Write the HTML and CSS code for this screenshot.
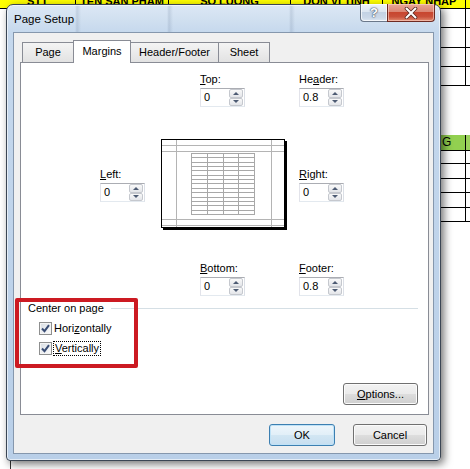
FILE: index.html
```html
<!DOCTYPE html>
<html>
<head>
<meta charset="utf-8">
<link rel="stylesheet" href="styles.css">
</head>
<body>
<div class="sheet">
  <div class="hdr">
    <div class="hc w1"><span>STT</span></div>
    <div class="hc w2"><span>TEN SAN PHAM</span></div>
    <div class="hc w3"><span>SO LUONG</span></div>
    <div class="hc w4"><span>DON VI TINH</span></div>
    <div class="hc w5"><span>NGAY NHAP</span></div>
    <div class="hc w6"></div>
  </div>
  <div class="srow h18"><div class="sp"></div><div class="ca"></div><div class="cb"></div></div>
  <div class="srow h19"><div class="sp"></div><div class="ca"></div><div class="cb"></div></div>
  <div class="srow h18"><div class="sp"></div><div class="ca"></div><div class="cb"></div></div>
  <div class="srow h18"><div class="sp"></div><div class="ca"></div><div class="cb"></div></div>
  <div class="sgap"></div>
  <div class="srow green"><div class="sp"></div><div class="ca"><div class="gcell">G</div></div><div class="cb"></div></div>
  <div class="srow h12"><div class="sp"></div><div class="ca"></div><div class="cb"></div></div>
  <div class="srow h14"><div class="sp"></div><div class="ca"></div><div class="cb"></div></div>
  <div class="srow h13"><div class="sp"></div><div class="ca"></div><div class="cb"></div></div>
  <div class="srow h14"><div class="sp"></div><div class="ca"></div><div class="cb"></div></div>
  <div class="srow h13"><div class="sp"></div><div class="ca"></div><div class="cb"></div></div>
</div>

<div class="window">
  <div class="titlebar">
    <span class="title">Page Setup</span>
    <div class="capbtns">
      <div class="cap-help">?</div>
      <div class="cap-close">
        <svg width="14" height="12" viewBox="0 0 14 12">
          <path d="M2.5 1.5 L11.5 10.5 M11.5 1.5 L2.5 10.5" stroke="#5a2a22" stroke-width="3.6" stroke-linecap="round" fill="none"/>
          <path d="M2.5 1.5 L11.5 10.5 M11.5 1.5 L2.5 10.5" stroke="#ffffff" stroke-width="2" stroke-linecap="round" fill="none"/>
        </svg>
      </div>
    </div>
  </div>
  <div class="client">
    <div class="tabs">
      <div class="tab t-page">Page</div>
      <div class="tab t-margins sel">Margins</div>
      <div class="tab t-hf">Header/Footer</div>
      <div class="tab t-sheet">Sheet</div>
    </div>
    <div class="panel">
      <div class="row-top">
        <div class="field">
          <div class="lbl"><u>T</u>op:</div>
          <div class="spin"><span class="val">0</span><div class="arrows"><div class="ab"><i class="up"></i></div><div class="ab"><i class="dn"></i></div></div></div>
        </div>
        <div class="field">
          <div class="lbl">He<u>a</u>der:</div>
          <div class="spin"><span class="val">0.8</span><div class="arrows"><div class="ab"><i class="up"></i></div><div class="ab"><i class="dn"></i></div></div></div>
        </div>
      </div>

      <div class="row-mid">
        <div class="field f-left">
          <div class="lbl"><u>L</u>eft:</div>
          <div class="spin"><span class="val">0</span><div class="arrows"><div class="ab"><i class="up"></i></div><div class="ab"><i class="dn"></i></div></div></div>
        </div>
        <svg class="preview" width="127" height="92" viewBox="0 0 127 92" shape-rendering="crispEdges">
          <rect x="0.5" y="0.5" width="123" height="88" fill="#fff" stroke="#000"/>
          <rect x="124" y="2" width="2" height="89" fill="#000"/>
          <rect x="2" y="89" width="124" height="2" fill="#000"/>
          <g stroke="#b4b4b4" stroke-width="1">
            <line x1="15.5" y1="1" x2="15.5" y2="88"/>
            <line x1="110.5" y1="1" x2="110.5" y2="88"/>
            <line x1="1" y1="6.5" x2="123" y2="6.5"/>
            <line x1="1" y1="12.5" x2="123" y2="12.5"/>
            <line x1="1" y1="80.5" x2="123" y2="80.5"/>
            <line x1="1" y1="86.5" x2="123" y2="86.5"/>
          </g>
          <g stroke="#a8a8a8" stroke-width="1">
            <line x1="30.5" y1="14" x2="30.5" y2="76"/>
            <line x1="46.5" y1="14" x2="46.5" y2="76"/>
            <line x1="62.5" y1="14" x2="62.5" y2="76"/>
            <line x1="77.5" y1="14" x2="77.5" y2="76"/>
            <line x1="93.5" y1="14" x2="93.5" y2="76"/>
            <line x1="30" y1="14.5" x2="94" y2="14.5"/>
            <line x1="30" y1="18.5" x2="94" y2="18.5"/>
            <line x1="30" y1="23.5" x2="94" y2="23.5"/>
            <line x1="30" y1="27.5" x2="94" y2="27.5"/>
            <line x1="30" y1="31.5" x2="94" y2="31.5"/>
            <line x1="30" y1="36.5" x2="94" y2="36.5"/>
            <line x1="30" y1="40.5" x2="94" y2="40.5"/>
            <line x1="30" y1="44.5" x2="94" y2="44.5"/>
            <line x1="30" y1="49.5" x2="94" y2="49.5"/>
            <line x1="30" y1="53.5" x2="94" y2="53.5"/>
            <line x1="30" y1="58.5" x2="94" y2="58.5"/>
            <line x1="30" y1="62.5" x2="94" y2="62.5"/>
            <line x1="30" y1="66.5" x2="94" y2="66.5"/>
            <line x1="30" y1="71.5" x2="94" y2="71.5"/>
            <line x1="30" y1="75.5" x2="94" y2="75.5"/>
          </g>
        </svg>
        <div class="field f-right">
          <div class="lbl"><u>R</u>ight:</div>
          <div class="spin"><span class="val">0</span><div class="arrows"><div class="ab"><i class="up"></i></div><div class="ab"><i class="dn"></i></div></div></div>
        </div>
      </div>

      <div class="row-bot">
        <div class="field">
          <div class="lbl"><u>B</u>ottom:</div>
          <div class="spin"><span class="val">0</span><div class="arrows"><div class="ab"><i class="up"></i></div><div class="ab"><i class="dn"></i></div></div></div>
        </div>
        <div class="field">
          <div class="lbl"><u>F</u>ooter:</div>
          <div class="spin"><span class="val">0.8</span><div class="arrows"><div class="ab"><i class="up"></i></div><div class="ab"><i class="dn"></i></div></div></div>
        </div>
      </div>

      <div class="group">
        <div class="group-head"><span>Center on page</span><div class="gline"></div></div>
        <div class="chk">
          <span class="box"><svg width="11" height="11" viewBox="0 0 11 11"><path d="M2 5.5 L4.5 8.2 L9 2.2" stroke="#3a4d74" stroke-width="2" fill="none"/></svg></span>
          <span class="ctext">Hori<u>z</u>ontally</span>
        </div>
        <div class="chk">
          <span class="box"><svg width="11" height="11" viewBox="0 0 11 11"><path d="M2 5.5 L4.5 8.2 L9 2.2" stroke="#3a4d74" stroke-width="2" fill="none"/></svg></span>
          <span class="ctext focus"><u>V</u>ertically</span>
        </div>
      </div>

      <div class="opt-row"><div class="btn b-opt"><u>O</u>ptions...</div></div>
    </div>
    <div class="footer">
      <div class="btn b-ok">OK</div>
      <div class="btn b-cancel">Cancel</div>
    </div>
  </div>
</div>
<div class="annot"></div>
</body>
</html>
```

FILE: styles.css
```css
* { box-sizing: border-box; }
html, body { margin: 0; padding: 0; }
body {
  width: 470px;
  height: 469px;
  overflow: hidden;
  position: relative;
  background: #fff;
  font-family: "Liberation Sans", Arial, sans-serif;
  font-size: 11px;
  color: #000;
}

/* ---------- spreadsheet behind ---------- */
.sheet {
  width: 470px;
  height: 469px;
  background: linear-gradient(#333, #333) 10px 455px / 1px 14px no-repeat, #fff;
}
.hdr {
  height: 9px;
  background: #ffff00;
  border-bottom: 1px solid #000;
  display: flex;
  overflow: hidden;
}
.hc {
  border-right: 1px solid #000;
  overflow: hidden;
  text-align: center;
  font-weight: bold;
  font-size: 11px;
  line-height: 11px;
}
.hc span { display: block; margin-top: -4px; white-space: nowrap; }
.w1 { width: 76px; }
.w2 { width: 93px; }
.w3 { width: 122px; }
.w4 { width: 92px; }
.w5 { width: 83px; }
.w6 { flex: 1; border-right: none; }

.srow { display: flex; }
.srow .sp { width: 420px; }
.srow .ca { width: 45px; display: flex; justify-content: flex-end; border-bottom: 1px solid #000; }
.srow .cb { flex: 1; border-left: 1px solid #000; border-bottom: 1px solid #000; }
.h18 { height: 19px; }
.h19 { height: 20px; }
.h12 { height: 13px; }
.h13 { height: 14px; }
.h14 { height: 15px; }
.sgap { height: 49px; }
.green { height: 16px; }
.green .cb { background: #9bd25c; }
.gcell {
  width: 25px;
  background: #92d050;
  font-size: 12px;
  line-height: 15px;
  padding-left: 2px;
}

/* ---------- window ---------- */
.window {
  position: absolute;
  left: 6px;
  top: 4px;
  width: 435px;
  height: 457px;
  border: 1px solid #3b4654;
  border-radius: 7px 7px 4px 4px;
  background:
    linear-gradient(90deg, transparent 68px, rgba(90,110,140,.18) 70px, transparent 74px,
      transparent 160px, rgba(90,110,140,.18) 162px, transparent 166px,
      transparent 282px, rgba(90,110,140,.18) 284px, transparent 288px) 0 0 / 100% 28px no-repeat,
    linear-gradient(180deg, #dce8f5 0px, #d1e0f0 14px, #c5d8ed 28px, #b9cfe8 100%);
  box-shadow: 3px 3px 9px rgba(0,0,0,.55), inset 0 0 0 1px rgba(255,255,255,.6);
  padding: 0 6px 6px 6px;
  display: flex;
  flex-direction: column;
}
.titlebar {
  height: 27px;
  display: flex;
  justify-content: space-between;
  align-items: flex-start;
}
.title {
  margin-left: 1px;
  font-size: 11.5px;
  line-height: 27px;
  margin-top: 1px;
  color: #000;
}
.capbtns { display: flex; margin-top: -1px; margin-right: -1px; }
.cap-help {
  width: 27px;
  height: 18px;
  border: 1px solid #6b788a;
  border-top: none;
  border-right: none;
  border-radius: 0 0 0 4px;
  background: linear-gradient(180deg, #eef3f9 0%, #dce6f1 45%, #c3d2e4 50%, #cbd8e8 80%, #dde7f2 100%);
  box-shadow: inset 0 0 0 1px rgba(255,255,255,.7);
  text-align: center;
  font-weight: bold;
  font-size: 13px;
  line-height: 17px;
  color: #fff;
  text-shadow: 0 0 1px #4b5a70, 0 0 1px #4b5a70, 0 0 2px #4b5a70;
}
.cap-close {
  width: 48px;
  height: 18px;
  border: 1px solid #6e2a22;
  border-top: none;
  border-radius: 0 0 4px 0;
  background: linear-gradient(180deg, #e9a897 0%, #db8573 45%, #c8462f 50%, #c9503a 75%, #e38c71 100%);
  box-shadow: inset 0 0 0 1px rgba(255,220,210,.55);
  display: flex;
  align-items: center;
  justify-content: center;
}

.client {
  flex: 1;
  border: 1px solid #8597ad;
  background: #f0f0f0;
  display: flex;
  flex-direction: column;
}

/* ---------- tabs ---------- */
.tabs {
  height: 22px;
  margin-top: 7px;
  padding-left: 8px;
  display: flex;
  align-items: flex-end;
}
.tab {
  height: 20px;
  border: 1px solid #898c95;
  border-bottom: none;
  background: linear-gradient(180deg, #f4f4f4 0%, #ebebeb 50%, #e2e2e2 100%);
  text-align: center;
  line-height: 19px;
  margin-left: -1px;
}
.tab.sel {
  height: 23px;
  margin-bottom: -1px;
  background: #fff;
  position: relative;
  z-index: 1;
  line-height: 21px;
}
.t-page { width: 52px; margin-left: 0; }
.t-margins { width: 58px; }
.t-hf { width: 89px; }
.t-sheet { width: 52px; }

.panel {
  width: 409px;
  height: 353px;
  margin-left: 6px;
  border: 1px solid #898c95;
  background: #fff;
  display: flex;
  flex-direction: column;
}

/* ---------- fields ---------- */
.field { width: 99px; }
.lbl { line-height: 13px; margin-bottom: 2px; white-space: nowrap; }
.spin {
  width: 45px;
  height: 19px;
  border: 1px solid;
  border-color: #abadb3 #dbdfe6 #e3e9ef #e2e3ea;
  background: #fff;
  display: flex;
}
.val { flex: 1; padding-left: 3px; line-height: 17px; }
.arrows {
  width: 15px;
  display: flex;
  flex-direction: column;
  padding: 0 1px 0 0;
}
.ab {
  flex: 1;
  border: 1px solid #c5c8ce;
  border-radius: 2px;
  background: linear-gradient(180deg, #f9f9f9, #e3e5e9);
  display: flex;
  align-items: center;
  justify-content: center;
}
.ab i { width: 0; height: 0; border-left: 3px solid transparent; border-right: 3px solid transparent; }
.ab i.up { border-bottom: 3px solid #4d5b73; }
.ab i.dn { border-top: 3px solid #4d5b73; }

.row-top, .row-bot { display: flex; padding-left: 179px; }
.row-top { margin-top: 10px; }
.row-mid {
  display: flex;
  align-items: center;
  margin-top: 32px;
  padding-left: 79px;
}
.f-left { width: 61px; }
.preview { display: block; }
.f-right { margin-left: 11px; }
.row-bot { margin-top: 31px; }

/* ---------- group ---------- */
.group { margin-top: 5px; padding-left: 7px; }
.group-head { display: flex; align-items: center; height: 14px; }
.group-head span { line-height: 13px; }
.gline { flex: 1; height: 1px; background: #d5dfe5; margin-left: 7px; margin-right: 10px; }
.chk {
  display: flex;
  align-items: center;
  height: 16px;
  padding-left: 11px;
  margin-top: 4px;
}
.group-head + .chk { margin-top: 5px; }
.box {
  width: 13px;
  height: 13px;
  border: 1px solid #8e8f8f;
  background: linear-gradient(135deg, #d8dde3 0%, #eef0f2 60%, #fbfbfb 100%);
  box-shadow: inset 0 0 0 1px #f4f4f4;
  display: flex;
  align-items: center;
  justify-content: center;
  margin-right: 2px;
}
.ctext { line-height: 13px; }
.focus { border: 1px dotted #000; padding: 0 1px; margin-left: -1px; }

/* ---------- buttons ---------- */
.opt-row {
  margin-top: auto;
  display: flex;
  justify-content: flex-end;
  padding: 0 10px 9px 0;
}
.btn {
  height: 22px;
  border: 1px solid #707070;
  border-radius: 3px;
  background: linear-gradient(180deg, #f2f2f2 0%, #ebebeb 48%, #dddddd 52%, #cfcfcf 100%);
  box-shadow: inset 0 0 0 1px #fbfbfb;
  text-align: center;
  line-height: 20px;
}
.b-opt { width: 75px; }
.footer {
  display: flex;
  justify-content: flex-end;
  margin-top: 9px;
  padding-right: 6px;
}
.b-ok {
  width: 66px;
  border-color: #3c7fb1;
  background: linear-gradient(180deg, #eef6fb 0%, #e2eff8 48%, #d2e6f3 52%, #c6def0 100%);
  box-shadow: inset 0 0 0 1px #bfe2f7;
}
.b-cancel { width: 74px; margin-left: 18px; }

/* ---------- annotation overlay ---------- */
.annot {
  position: absolute;
  left: 15px;
  top: 298px;
  width: 123px;
  height: 70px;
  border: 4px solid #cc1a22;
  border-radius: 2px;
}
```
